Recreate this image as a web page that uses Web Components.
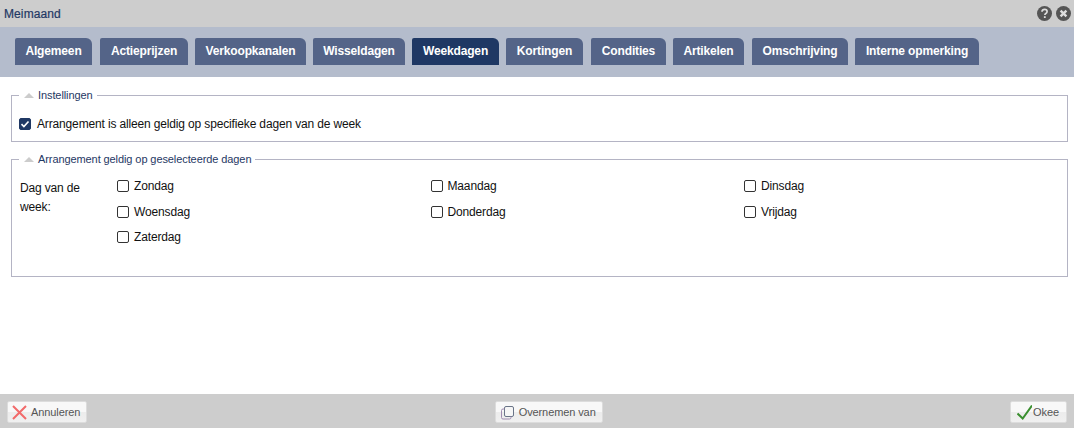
<!DOCTYPE html>
<html lang="nl">
<head>
<meta charset="utf-8">
<title>Meimaand</title>
<style>
  html, body { margin: 0; height: 100%; background: #fff; }
  body { font-family: "Liberation Sans", Arial, sans-serif; font-size: 12px; color: #111; overflow: hidden; }
  tab-button.wide-gap { margin-right: 1px; }
</style>
</head>
<body>
<dialog-window heading="Meimaand">
  <tab-button slot="tabs" class="wide-gap" style="--w:77px">Algemeen</tab-button>
  <tab-button slot="tabs" style="--w:88px">Actieprijzen</tab-button>
  <tab-button slot="tabs" style="--w:111px">Verkoopkanalen</tab-button>
  <tab-button slot="tabs" style="--w:92px">Wisseldagen</tab-button>
  <tab-button slot="tabs" style="--w:87px" active>Weekdagen</tab-button>
  <tab-button slot="tabs" class="wide-gap" style="--w:77px">Kortingen</tab-button>
  <tab-button slot="tabs" style="--w:75px">Condities</tab-button>
  <tab-button slot="tabs" class="wide-gap" style="--w:71px">Artikelen</tab-button>
  <tab-button slot="tabs" style="--w:96px">Omschrijving</tab-button>
  <tab-button slot="tabs" style="--w:124px">Interne opmerking</tab-button>

  <form-group heading="Instellingen" style="--pad-top:16px;--pad-left:7px;--check-gap:6px">
    <check-field checked>Arrangement is alleen geldig op specifieke dagen van de week</check-field>
  </form-group>

  <form-group heading="Arrangement geldig op geselecteerde dagen">
    <day-grid label="Dag van de week:">
      <check-field>Zondag</check-field>
      <check-field>Maandag</check-field>
      <check-field>Dinsdag</check-field>
      <check-field>Woensdag</check-field>
      <check-field>Donderdag</check-field>
      <check-field>Vrijdag</check-field>
      <check-field>Zaterdag</check-field>
    </day-grid>
  </form-group>

  <foot-button slot="footer" icon="cancel">Annuleren</foot-button>
  <foot-button slot="footer" icon="copy">Overnemen van</foot-button>
  <foot-button slot="footer" icon="ok">Okee</foot-button>
</dialog-window>

<script>
const windowTemplate = `
  <style>
    :host {
      display: flex;
      flex-direction: column;
      height: 428px;
    }

    .title {
      height: 27px;
      background: #cdcdcd;
      display: flex;
      align-items: center;
      justify-content: space-between;
      padding: 0 3px 0 4px;
      color: #1f3864;
      font-size: 12px;
      letter-spacing: 0.1px;
      -webkit-text-stroke: 0.2px #1f3864;
    }

    .title svg {
      display: block;
      width: 15px;
      height: 15px;
    }

    .actions {
      display: flex;
      gap: 4px;
    }

    .tabs {
      height: 50px;
      box-sizing: border-box;
      background: #b4bccc;
      display: flex;
      gap: 7px;
      padding: 11px 0 0 15px;
    }

    .body {
      flex: 1;
      padding: 12px 6px 0 11px;
    }

    .footer {
      height: 34px;
      background: #cdcdcd;
      display: flex;
      align-items: center;
      justify-content: space-between;
      padding: 2px 7px 0 7px;
      box-sizing: border-box;
    }
  </style>
  <div class="title">
    <span class="name"></span>
    <span class="actions">
      <svg viewBox="0 0 15 15"><circle cx="7.5" cy="7.5" r="7.5" fill="#555"/><path d="M5 5.8c0-1.6 1.1-2.5 2.6-2.5s2.5.9 2.5 2.2c0 1-.6 1.5-1.3 2-.6.4-.9.7-.9 1.4" fill="none" stroke="#ddd" stroke-width="1.7"/><rect x="6.9" y="10.2" width="1.8" height="1.8" fill="#ddd"/></svg>
      <svg viewBox="0 0 15 15"><circle cx="7.5" cy="7.5" r="7.5" fill="#555"/><path d="M4.6 4.6l5.8 5.8M10.4 4.6l-5.8 5.8" stroke="#ddd" stroke-width="2.4"/></svg>
    </span>
  </div>
  <div class="tabs"><slot name="tabs"></slot></div>
  <div class="body"><slot></slot></div>
  <div class="footer"><slot name="footer"></slot></div>
`;

class DialogWindow extends HTMLElement {
  constructor() {
    super();
    this.attachShadow({ mode: 'open' });
    this.shadowRoot.innerHTML = windowTemplate;
  }

  connectedCallback() {
    this.shadowRoot.querySelector('.name').textContent = this.getAttribute('heading');
  }
}

class TabButton extends HTMLElement {
  constructor() {
    super();
    this.attachShadow({ mode: 'open' });
    this.shadowRoot.innerHTML = `
      <style>
        :host {
          display: block;
          box-sizing: border-box;
          width: var(--w);
          height: 27px;
          line-height: 27px;
          text-align: center;
          background: #546488;
          color: #fff;
          font-size: 12px;
          font-weight: bold;
          letter-spacing: -0.15px;
          border-radius: 2px 6px 0 0;
        }

        :host([active]) {
          background: #1f3864;
        }
      </style>
      <slot></slot>
    `;
  }
}

class FormGroup extends HTMLElement {
  constructor() {
    super();
    this.attachShadow({ mode: 'open' });
    this.shadowRoot.innerHTML = `
      <style>
        :host {
          display: block;
          margin-bottom: 11px;
        }

        fieldset {
          margin: 0;
          padding: var(--pad-top, 12px) 8px 10px var(--pad-left, 8px);
          border: 1px solid #b4b4c4;
        }

        legend {
          margin-left: calc(7px - var(--pad-left, 8px));
          padding: 0 4px;
          font-size: 11px;
          letter-spacing: -0.09px;
          line-height: 12px;
          color: #1f3864;
          display: flex;
          align-items: center;
          gap: 4px;
        }

        .arrow {
          width: 0;
          height: 0;
          margin-left: 1px;
          border-left: 5px solid transparent;
          border-right: 5px solid transparent;
          border-bottom: 5px solid #ccc;
        }
      </style>
      <fieldset>
        <legend><span class="arrow"></span><span class="text"></span></legend>
        <slot></slot>
      </fieldset>
    `;
  }

  connectedCallback() {
    this.shadowRoot.querySelector('.text').textContent = this.getAttribute('heading');
  }
}

class CheckField extends HTMLElement {
  constructor() {
    super();
    this.attachShadow({ mode: 'open' });
    this.shadowRoot.innerHTML = `
      <style>
        :host {
          display: flex;
          align-items: center;
          gap: var(--check-gap, 5px);
          height: 14px;
          font-size: 12px;
          letter-spacing: -0.15px;
        }

        .box {
          box-sizing: border-box;
          width: 12px;
          height: 12px;
          border: 1px solid #333;
          border-radius: 2px;
          background: #fff;
          flex: none;
        }

        :host([checked]) .box {
          background: #1f3864;
          border-color: #1f3864;
        }

        svg {
          display: none;
          width: 10px;
          height: 10px;
        }

        :host([checked]) svg {
          display: block;
        }
      </style>
      <span class="box"><svg viewBox="0 0 10 10"><path d="M1.5 5.2l2.4 2.3 4.6-5" fill="none" stroke="#fff" stroke-width="1.6"/></svg></span>
      <slot></slot>
    `;
  }
}

class DayGrid extends HTMLElement {
  constructor() {
    super();
    this.attachShadow({ mode: 'open' });
    this.shadowRoot.innerHTML = `
      <style>
        :host {
          display: flex;
          height: 89px;
        }

        .label {
          width: 97px;
          box-sizing: border-box;
          padding: 2px 20px 0 0;
          flex: none;
          font-size: 12px;
          line-height: 19px;
          letter-spacing: -0.15px;
        }

        .grid {
          flex: 1;
          display: grid;
          grid-template-columns: repeat(3, 313.5px);
          grid-auto-rows: 14px;
          row-gap: 11.5px;
          padding-top: 2px;
        }
      </style>
      <div class="label"></div>
      <div class="grid"><slot></slot></div>
    `;
  }

  connectedCallback() {
    this.shadowRoot.querySelector('.label').textContent = this.getAttribute('label');
  }
}

const footIcons = {
  cancel: '<path d="M1 1l13 13M14 1L1 14" stroke="#f26a6a" stroke-width="2" fill="none"/>',
  copy: '<rect x="4.5" y="1.5" width="9" height="10" rx="1.5" fill="#f6f6f6" stroke="#6a7488"/><path d="M4.5 4H3A1.5 1.5 0 0 0 1.5 5.5v7A1.5 1.5 0 0 0 3 14h6.5a1.5 1.5 0 0 0 1.5-1.5v-1" fill="none" stroke="#a08cb0"/>',
  ok: '<path d="M.5 8.5l5.2 5L15 .5" stroke="#3a8f2f" stroke-width="2" fill="none"/>'
};

class FootButton extends HTMLElement {
  constructor() {
    super();
    this.attachShadow({ mode: 'open' });
    this.shadowRoot.innerHTML = `
      <style>
        :host {
          display: flex;
          align-items: center;
          gap: 4px;
          height: 22px;
          box-sizing: border-box;
          padding: 0 6px 0 4px;
          border-radius: 2px;
          border: 1px solid #dcdcdc;
          background: linear-gradient(#f8f8f8, #f8f8f8 50%, #ececec 50%, #f0f0f0);
          color: #555;
          font-size: 11px;
          letter-spacing: -0.1px;
        }

        :host([icon=ok]) {
          padding-left: 6px;
          gap: 1px;
          padding-right: 7px;
        }

        svg {
          width: 15px;
          height: 15px;
          flex: none;
        }
      </style>
      <svg viewBox="0 0 15 15"></svg>
      <slot></slot>
    `;
  }

  connectedCallback() {
    this.shadowRoot.querySelector('svg').innerHTML = footIcons[this.getAttribute('icon')];
  }
}

customElements.define('dialog-window', DialogWindow);
customElements.define('tab-button', TabButton);
customElements.define('form-group', FormGroup);
customElements.define('check-field', CheckField);
customElements.define('day-grid', DayGrid);
customElements.define('foot-button', FootButton);
</script>
</body>
</html>
